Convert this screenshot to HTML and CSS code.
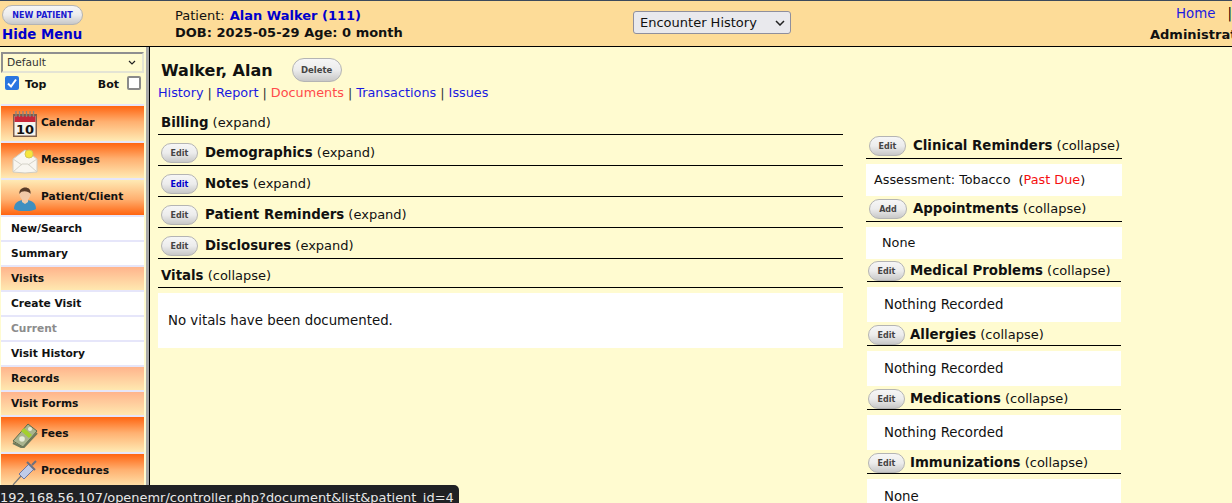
FILE: index.html
```html
<!DOCTYPE html>
<html lang="en">
<head>
<meta charset="utf-8">
<title>OpenEMR</title>
<link rel="stylesheet" href="styles.css">
</head>
<body>
<header class="topbar">
  <div class="top-left">
    <button class="pill new-patient">NEW PATIENT</button>
    <a class="hide-menu">Hide Menu</a>
  </div>
  <div class="patient-info">
    <div>Patient: <b class="blue">Alan Walker (111)</b></div>
    <div class="dob">DOB: 2025-05-29 Age: 0 month</div>
  </div>
  <div class="enc"><div class="enc-select">Encounter History<svg width="10" height="6" viewBox="0 0 10 6"><path d="M1 1l4 4 4-4" fill="none" stroke="#222" stroke-width="1.5"/></svg></div></div>
  <div class="top-right">
    <div class="home"><a>Home</a><span class="sep">|</span></div>
    <div class="admin">Administrator</div>
  </div>
</header>
<div class="body">
  <nav class="sidebar">
    <div class="sel">Default<svg width="8" height="5" viewBox="0 0 8 5"><path d="M1 1l3 3 3-3" fill="none" stroke="#222" stroke-width="1.2"/></svg></div>
    <div class="checks">
      <span class="chk on"><svg width="14" height="14" viewBox="0 0 14 14"><path d="M3 7.5l3 3 5-7" fill="none" stroke="#fff" stroke-width="2"/></svg></span><b class="chk-t">Top</b>
      <b class="chk-b">Bot</b><span class="chk"></span>
    </div>
    <div class="menu">
    <a class="big down">
      <svg class="ic" width="26" height="26" viewBox="0 0 26 26"><rect x="1" y="3" width="24" height="23" fill="#7d5f4c"/><rect x="2.500" y="5" width="21" height="19.500" fill="#f6f4ee"/><rect x="2.500" y="5" width="21" height="6" fill="#c8283a"/><path d="M4 0v6M7.500 0v6M11 0v6M14.500 0v6M18 0v6M21.500 0v6" stroke="#8a8580" stroke-width="1.300"/><text x="13" y="23" class="ic-t">10</text></svg>
      Calendar</a>
    <a class="big down">
      <svg class="ic" width="26" height="26" viewBox="0 0 26 26"><path d="M1 11L13 2l12 9v13l-12 1-12-1z" fill="#f8f6f0" stroke="#cfcdc4"/><path d="M1 24l9-8h6l9 8M1 11l9 6M25 11l-9 6" fill="none" stroke="#d4d2c8"/><circle cx="17" cy="6" r="4" fill="#f6e63c" stroke="#d6c854"/></svg>
      Messages</a>
    <a class="big up">
      <svg class="ic" width="26" height="26" viewBox="0 0 26 26"><path d="M2 24c0-6 4-9 11-9s11 3 11 9c-5 3-17 3-22 0z" fill="#3f8fc0"/><path d="M10 13h6v4l-3 2-3-2z" fill="#f1c9a8"/><ellipse cx="13" cy="9" rx="5.500" ry="6.500" fill="#f1c9a8"/><path d="M7.500 9c-1.500-8 12.500-9 11 0-2-3-9-4-11 0z" fill="#5a3c28"/></svg>
      Patient/Client</a>
    <a class="sub">New/Search</a>
    <a class="sub">Summary</a>
    <a class="sub cat">Visits</a>
    <a class="sub">Create Visit</a>
    <a class="sub muted">Current</a>
    <a class="sub">Visit History</a>
    <a class="sub cat">Records</a>
    <a class="sub cat">Visit Forms</a>
    <a class="big down">
      <svg class="ic" width="26" height="26" viewBox="0 0 26 26"><path d="M1 19L16 2l9 7-14 16z" fill="#aab48e" stroke="#5e6a4c"/><path d="M1 21l10 5 14-15" fill="none" stroke="#6f7a5c" stroke-width="2"/><path d="M9 9l8 7 3-3-8-7z" fill="#a4d02c"/><circle cx="10" cy="17" r="2.800" fill="#e8ecd8"/><circle cx="18" cy="7" r="2" fill="#e8ecd8"/></svg>
      Fees</a>
    <a class="big down">
      <svg class="ic" width="26" height="26" viewBox="0 0 26 26"><path d="M1 26l8-9" stroke="#777" stroke-width="1.200"/><path d="M7 15l10-10 5 5-10 10z" fill="#c0cbe8" stroke="#7078a0"/><path d="M15 3l8 8M20 6l4-4" stroke="#6c7080" stroke-width="2"/></svg>
      Procedures</a>
    </div>
  </nav>
  <main class="main">
    <div class="title-row"><h1>Walker, Alan</h1><button class="pill del">Delete</button></div>
    <div class="links"><a>History</a> | <a>Report</a> | <a class="hot">Documents</a> | <a>Transactions</a> | <a>Issues</a></div>
    <div class="columns">
      <section class="col-left">
        <div class="sec billing"><span class="lbl"><b>Billing</b> (expand)</span></div>
        <div class="sec btn"><button class="pill edit">Edit</button><span class="lbl"><b>Demographics</b> (expand)</span></div>
        <div class="sec btn"><button class="pill edit blue">Edit</button><span class="lbl"><b>Notes</b> (expand)</span></div>
        <div class="sec btn"><button class="pill edit">Edit</button><span class="lbl"><b>Patient Reminders</b> (expand)</span></div>
        <div class="sec btn"><button class="pill edit">Edit</button><span class="lbl"><b>Disclosures</b> (expand)</span></div>
        <div class="sec vitals"><span class="lbl"><b>Vitals</b> (collapse)</span></div>
        <div class="box vit-box">No vitals have been documented.</div>
      </section>
      <aside class="col-right">
        <div class="rsec first"><button class="pill edit">Edit</button><span class="lbl"><b>Clinical Reminders</b> (collapse)</span></div>
        <div class="box r1">Assessment: Tobacco&nbsp; (<span class="red">Past Due</span>)</div>
        <div class="rsec second"><button class="pill edit add">Add</button><span class="lbl"><b>Appointments</b> (collapse)</span></div>
        <div class="box r2">None</div>
        <div class="rsec tight med"><button class="pill edit">Edit</button><span class="lbl"><b>Medical Problems</b> (collapse)</span></div>
        <div class="box r3">Nothing Recorded</div>
        <div class="rsec tight"><button class="pill edit">Edit</button><span class="lbl"><b>Allergies</b> (collapse)</span></div>
        <div class="box r3">Nothing Recorded</div>
        <div class="rsec tight"><button class="pill edit">Edit</button><span class="lbl"><b>Medications</b> (collapse)</span></div>
        <div class="box r3">Nothing Recorded</div>
        <div class="rsec tight"><button class="pill edit">Edit</button><span class="lbl"><b>Immunizations</b> (collapse)</span></div>
        <div class="box r3">None</div>
      </aside>
    </div>
  </main>
</div>
<div class="status">192.168.56.107/openemr/controller.php?document&amp;list&amp;patient_id=4</div>
</body>
</html>
```
FILE: styles.css
```css
* { box-sizing: border-box; }
html, body { margin: 0; height: 503px; overflow: hidden; }
body { font-family: "DejaVu Sans", sans-serif; font-size: 13px; color: #111; background: #fffbd0; position: relative; }
.blue { color: #0000cc; }
.red { color: #f51010; }
.topbar { height: 47px; background: #fddc98; border-top: 1px solid #3c4a5c; border-bottom: 1px solid #000; display: flex; overflow: hidden; }
.top-left { width: 175px; padding: 4px 0 0 2px; flex: none; }
.pill { display: flex; align-items: center; justify-content: center; padding: 0; font-family: "DejaVu Sans", sans-serif; font-weight: bold; color: #444; border: 1px solid #b4b4b4; border-radius: 12px; background: linear-gradient(#f6f6f6, #ececec 50%, #c8c8c8); }
.new-patient { width: 81px; height: 20px; font-size: 8px; color: #1a1ad0; }
.hide-menu { display: block; font-size: 13.33px; font-weight: bold; color: #0000cc; margin-top: 1px; line-height: 18px; }
.patient-info { width: 458px; flex: none; padding-top: 6px; line-height: 17px; }
.patient-info div { height: 17px; }
.patient-info b { margin-left: 1px; }
.dob { font-weight: bold; }
.enc { width: 505px; flex: none; padding-top: 10px; }
.enc-select { width: 158px; height: 23px; background: #e9e9ed; border: 1px solid #8f8f9d; border-radius: 3px; display: flex; align-items: center; justify-content: space-between; padding: 0 5px 0 6px; font-size: 13px; }
.top-right { flex: none; width: 140px; position: relative; }
.home { padding: 4px 0 0 38px; height: 22px; line-height: 17px; font-size: 13.33px; }
.home a { color: #1a1ae0; }
.sep { margin-left: 12px; color: #000; }
.admin { font-weight: bold; white-space: nowrap; line-height: 17px; padding: 3px 0 0 12px; }
.body { display: flex; height: 456px; }
.sidebar { width: 150px; flex: none; background: #fffbd0; border-right: 1px solid #000; box-shadow: inset -3px 0 0 #a8a8a8, inset -4px 0 0 #fffbd0; overflow: hidden; padding: 5px 5px 0 1px; display: flex; flex-direction: column; align-items: stretch; }
.sel { height: 21px; flex: none; border: 2px solid; border-color: #8f8f8f #e4e4d4 #e4e4d4 #8f8f8f; display: flex; align-items: center; justify-content: space-between; font-size: 10.67px; padding: 0 6px 0 4px; color: #333; }
.checks { display: flex; align-items: center; height: 16px; flex: none; margin-top: 2px; padding-left: 4px; font-size: 11px; }
.checks b { padding-top: 2px; }
.chk { width: 14px; height: 14px; border: 2px solid #8a8a8a; border-radius: 2px; background: #fff; display: block; flex: none; }
.chk.on { background: #2a76e0; border: 0; }
.chk.on svg { display: block; }
.chk-t { margin-left: 6px; }
.chk-b { margin-left: auto; margin-right: 8px; }
.checks .chk:last-child { margin-right: 3px; }
.menu { margin-top: 13px; padding-top: 2px; background: #e6e6fa; display: flex; flex-direction: column; gap: 2px; flex: none; }
.big { display: flex; align-items: center; height: 35px; font-size: 10.67px; font-weight: bold; color: #111; padding: 0 0 2px 11px; gap: 3px; }
.ic { flex: none; margin-top: 2px; }
.ic-t { font: bold 13px "DejaVu Sans", sans-serif; text-anchor: middle; fill: #111; }
.down { background: linear-gradient(#ff6410, #ffb070 45%, #ffeab4); }
.up { background: linear-gradient(#ffeab4, #ffb070 55%, #ff6410); }
.sub { display: flex; align-items: center; height: 23px; background: #fff; font-size: 10.67px; font-weight: bold; color: #111; padding-left: 10px; }
.sub.cat { background: linear-gradient(#ffb48c, #ffe8b0); }
.sub.muted { color: #8c8c8c; }
.main { flex: 1; padding: 11px 0 0 8px; min-width: 0; }
.title-row { display: flex; align-items: center; height: 24px; padding-left: 3px; }
h1 { margin: 0; padding-top: 2px; font-size: 16px; font-weight: bold; color: #111; line-height: 24px; }
.del { width: 50px; height: 24px; font-size: 8.5px; margin-left: 19px; }
.links { height: 17px; margin-top: 2px; line-height: 17px; color: #333; font-size: 12.8px; }
.links a { color: #1a1ae0; }
.links a.hot { color: #ff4a4a; }
.columns { display: flex; margin-top: 9px; }
.col-left { width: 685px; flex: none; }
.col-right { width: 256px; flex: none; margin-left: 23px; }
.lbl { display: block; line-height: 20px; }
.lbl b { font-size: 13.33px; }
.sec, .rsec { border-bottom: 1px solid #000; display: flex; align-items: flex-end; padding: 0 0 2px 3px; white-space: nowrap; }
.sec { height: 31px; }
.billing { height: 25px; padding-bottom: 1px; }
.vitals { height: 29px; padding-bottom: 1px; }
.sec.btn .edit { margin-right: 7px; }
.edit { width: 37px; height: 20px; font-size: 8px; flex: none; }
.edit.blue { color: #0000cc; }
.box { background: #fff; margin-top: 5px; }
.vit-box { height: 55px; padding: 20px 0 0 10px; font-size: 13.33px; }
.rsec .edit { margin-right: 7px; }
.rsec .add { width: 38px; margin-right: 6px; }
.first { height: 49px; }
.second { height: 26px; }
.rsec.tight { height: 24px; margin: 0 1px; padding: 0 0 0 1px; }
.rsec.tight.med { height: 23px; }
.rsec.tight .edit { margin-right: 5px; }
.r1 { height: 32px; padding: 8px 0 0 8px; font-size: 12.8px; }
.r2 { height: 32px; padding: 8px 0 0 16px; font-size: 12.8px; }
.r3 { height: 35px; margin-left: 1px; margin-right: 1px; padding: 10px 0 0 17px; font-size: 13.33px; }
.status { position: absolute; left: 0; bottom: 0; width: 459px; height: 18px; background: #202124; color: #e8e8e8; border-top-right-radius: 5px; font-size: 12.95px; line-height: 18px; padding-top: 4px; overflow: hidden; white-space: nowrap; }
```
